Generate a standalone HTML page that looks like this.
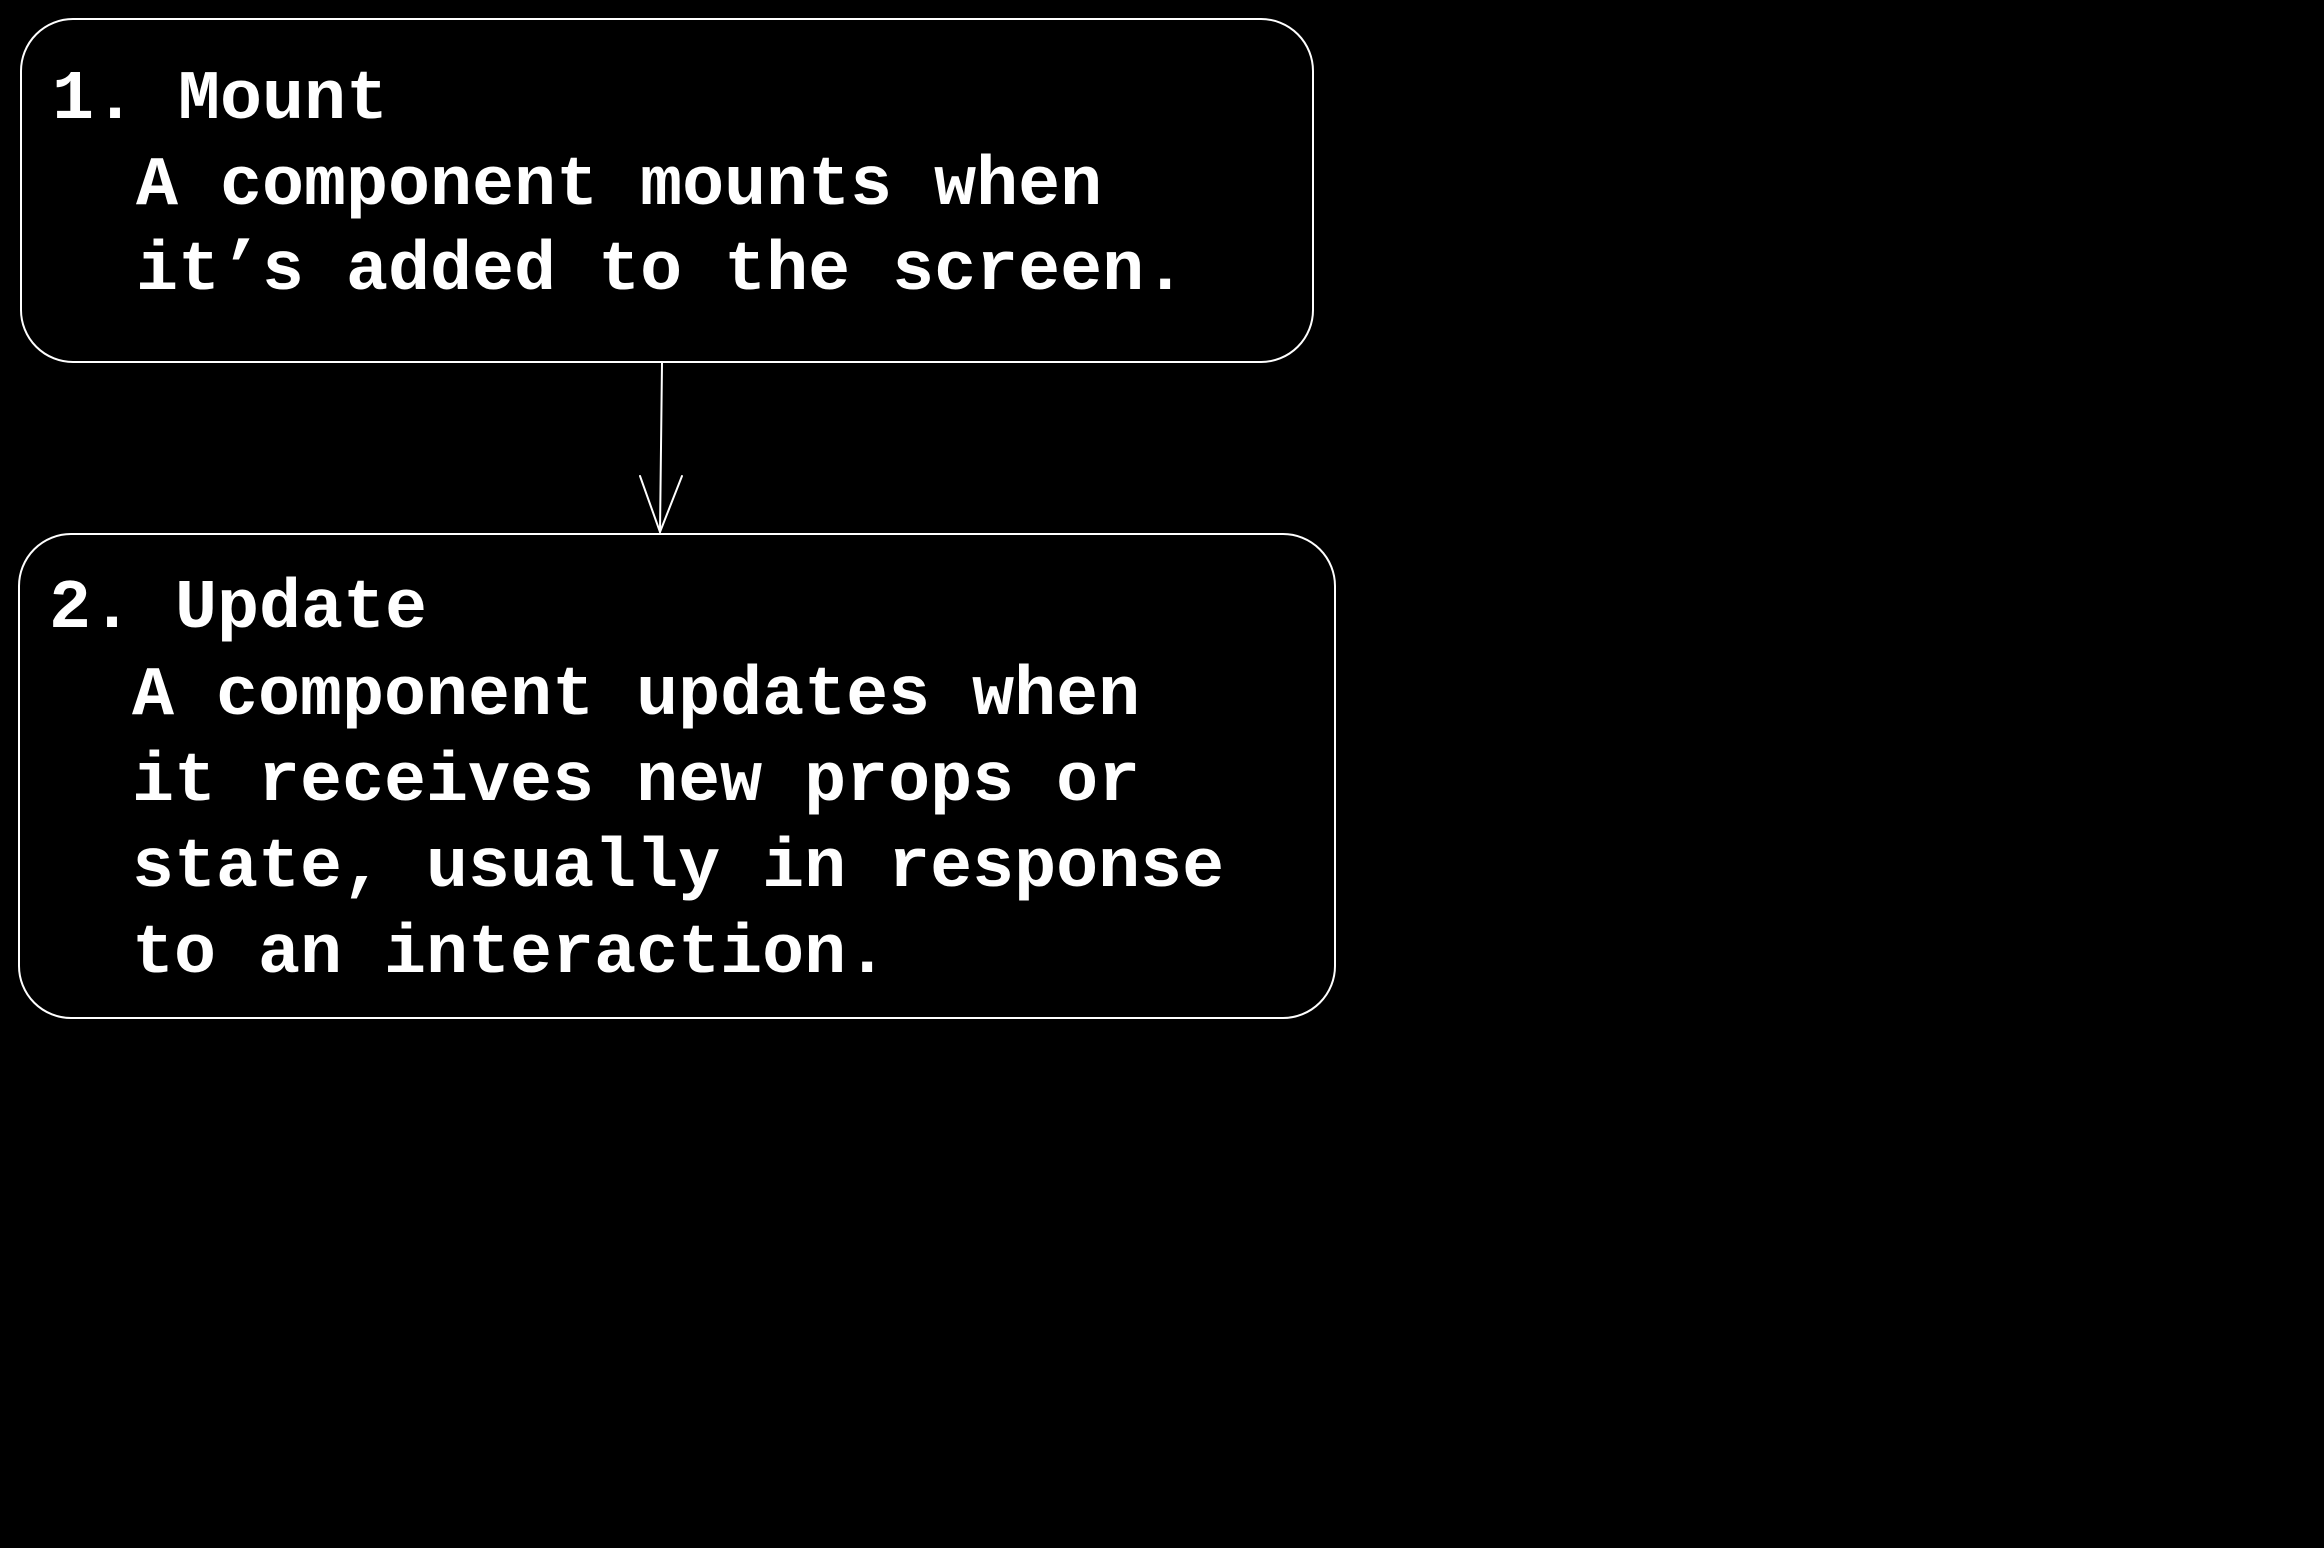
<!DOCTYPE html>
<html><head><meta charset="utf-8"><style>
html,body{margin:0;padding:0;background:#000;width:2324px;height:1548px;overflow:hidden}
svg{display:block}
text{font-family:"Liberation Mono",monospace;font-size:70px;font-weight:bold;fill:#fff;white-space:pre}
</style></head><body>
<svg width="2324" height="1548" viewBox="0 0 2324 1548">
<g fill="none" stroke="#fff" stroke-width="2" stroke-linecap="round">
<rect x="21" y="19" width="1292" height="343" rx="52"/>
<rect x="19" y="534" width="1316" height="484" rx="52"/>
<path d="M662 363 L660 532"/>
<path d="M640 476 L660 532 L682 476"/>
</g>
<text x="52" y="118">1. Mount</text>
<text x="136" y="204">A component mounts when</text>
<text x="136" y="289">it’s added to the screen.</text>
<text x="49" y="627">2. Update</text>
<text x="132" y="714">A component updates when</text>
<text x="132" y="800">it receives new props or</text>
<text x="132" y="886">state, usually in response</text>
<text x="132" y="972">to an interaction.</text>
</svg>
</body></html>
